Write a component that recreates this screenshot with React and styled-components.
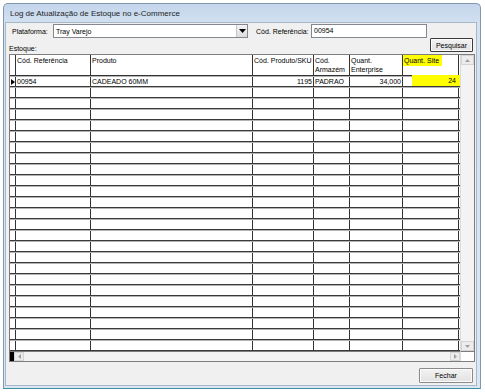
import React from 'react'
import styled, { createGlobalStyle } from 'styled-components'

const GlobalStyle = createGlobalStyle`
body {
  margin: 0;
  background: #ffffff;
  font-family: "Liberation Sans", Arial, sans-serif;
}
`

const COLS = '6px 75px 162px 61px 36px 53px 56px'

const rows = [
  { ref: '00954', produto: 'CADEADO 60MM', sku: '1195', armazem: 'PADRAO', enterprise: '34,000', site: '24' },
]
const EMPTY_ROWS = 25

function App() {
  const filler = Array.from({ length: EMPTY_ROWS })
  return (
    <Page>
      <GlobalStyle />
      <Window>
        <TitleBar>Log de Atualização de Estoque no e-Commerce</TitleBar>
        <Client>
          <FilterRow>
            <Label $w={38}>Plataforma:</Label>
            <Select>
              <SelectText>Tray Varejo</SelectText>
              <DropButton>
                <svg width="7" height="4" viewBox="0 0 7 4"><path d="M0 0h7L3.5 4z" fill="#000" /></svg>
              </DropButton>
            </Select>
            <Label $gap={8} $w={52}>Cód. Referência:</Label>
            <Input>00954</Input>
          </FilterRow>
          <SubRow>
            <Label>Estoque:</Label>
            <Button $w={43} $default>Pesquisar</Button>
          </SubRow>
          <GridFrame>
            <Table>
              <HeaderRow>
                <HeadCell />
                <HeadCell>Cód. Referência</HeadCell>
                <HeadCell>Produto</HeadCell>
                <HeadCell>Cód. Produto/SKU</HeadCell>
                <HeadCell>Cód.<br />Armazém</HeadCell>
                <HeadCell>Quant.<br />Enterprise</HeadCell>
                <HeadCell><Marker>Quant. Site</Marker></HeadCell>
              </HeaderRow>
              {rows.map((r) => (
                <Row key={r.ref}>
                  <Indicator>
                    <svg width="4" height="6" viewBox="0 0 4 6"><path d="M0 0l4 3-4 3z" fill="#000" /></svg>
                  </Indicator>
                  <Cell>{r.ref}</Cell>
                  <Cell>{r.produto}</Cell>
                  <Cell $right>{r.sku}</Cell>
                  <Cell>{r.armazem}</Cell>
                  <Cell $right>{r.enterprise}</Cell>
                  <Cell><SiteValue>{r.site}</SiteValue></Cell>
                </Row>
              ))}
              {filler.map((_, i) => (
                <Row key={i}>
                  <Indicator />
                  <Cell />
                  <Cell />
                  <Cell />
                  <Cell />
                  <Cell />
                  <Cell />
                </Row>
              ))}
            </Table>
            <VScroll>
              <ArrowBox>
                <svg width="5" height="3" viewBox="0 0 5 3"><path d="M0 3L2.5 0 5 3z" fill="#a0a0a0" /></svg>
              </ArrowBox>
              <Track />
              <ArrowBox>
                <svg width="5" height="3" viewBox="0 0 5 3"><path d="M0 0h5L2.5 3z" fill="#a0a0a0" /></svg>
              </ArrowBox>
            </VScroll>
            <HScroll>
              <BlackStub />
              <ArrowBox $h>
                <svg width="3" height="5" viewBox="0 0 3 5"><path d="M3 0v5L0 2.5z" fill="#a0a0a0" /></svg>
              </ArrowBox>
              <Track />
              <ArrowBox $h>
                <svg width="3" height="5" viewBox="0 0 3 5"><path d="M0 0v5L3 2.5z" fill="#a0a0a0" /></svg>
              </ArrowBox>
            </HScroll>
            <Corner />
          </GridFrame>
          <Footer>
            <Button $w={54} $h={15}>Fechar</Button>
          </Footer>
        </Client>
      </Window>
    </Page>
  )
}

export default App

const Page = styled.div`
padding: 3px 0 0 3px;
font-size: 7px;
color: #000;
`

const Window = styled.div`
width: 478px;
height: 386px;
box-sizing: border-box;
display: flex;
flex-direction: column;
border: 1px solid #8497ae;
border-bottom-color: #3f8ea4;
border-radius: 5px 5px 0 0;
background: linear-gradient(to bottom, #c4d6ec 0px, #d3e1f1 20px, #d9e6f3 100%);
padding: 0 3px 2px 1px;
`

const TitleBar = styled.div`
height: 18px;
display: flex;
align-items: center;
padding-left: 5px;
font-size: 8px;
color: #1e1e1e;
`

const Client = styled.div`
flex: 1;
background: #f0f0f0;
border: 1px solid #a9b8c9;
display: flex;
flex-direction: column;
padding: 1px 3px 0 0;
`

const FilterRow = styled.div`
display: flex;
align-items: center;
height: 14px;
padding-left: 6px;
`

const Label = styled.span`
${(p) => (p.$w ? `width: ${p.$w}px;` : '')}
margin-left: ${(p) => p.$gap || 0}px;
margin-right: 3px;
white-space: nowrap;
`

const Select = styled.div`
width: 195px;
height: 14px;
box-sizing: border-box;
border: 1px solid #828790;
background: #fff;
display: flex;
align-items: center;
`

const SelectText = styled.span`
flex: 1;
padding-left: 2px;
`

const DropButton = styled.div`
width: 11px;
height: 12px;
box-sizing: border-box;
border-left: 1px solid #c6c6c6;
background: linear-gradient(#f4f4f4, #dcdcdc);
display: flex;
align-items: center;
justify-content: center;
`

const Input = styled.div`
width: 116px;
height: 14px;
box-sizing: border-box;
border: 1px solid #828790;
background: #fff;
padding-left: 2px;
line-height: 12px;
`

const SubRow = styled.div`
display: flex;
justify-content: space-between;
align-items: flex-end;
height: 15px;
margin-top: -1px;
padding-left: 3px;
`

const Button = styled.div`
width: ${(p) => p.$w}px;
height: ${(p) => p.$h || 14}px;
box-sizing: border-box;
border: 1px solid ${(p) => (p.$default ? '#3c3c3c' : '#8a8a8a')};
box-shadow: inset 0 0 0 1px #fcfcfc;
border-radius: 1px;
background: linear-gradient(#f2f2f2, #e2e2e2);
display: flex;
align-items: center;
justify-content: center;
`

const GridFrame = styled.div`
margin: 2px 0 0 3px;
width: 466px;
height: 308px;
box-sizing: border-box;
border: 1px solid #7d7d7d;
background: #fff;
display: grid;
grid-template-columns: 1fr 14px;
grid-template-rows: 1fr 10px;
`

const Table = styled.div`
overflow: hidden;
`

const HeaderRow = styled.div`
display: grid;
grid-template-columns: ${COLS};
height: 21px;
box-sizing: border-box;
border-bottom: 1px solid #333;
`

const HeadCell = styled.div`
border-right: 1px solid #333;
padding: 1px 0 0 1px;
line-height: 9px;
white-space: nowrap;
overflow: visible;
`

const Marker = styled.span`
display: inline-block;
background: #ffff00;
margin: -1px 0 0 -1px;
padding: 1px 3px 1px 1px;
`

const Row = styled.div`
display: grid;
grid-template-columns: ${COLS};
height: 11px;
box-sizing: border-box;
border-top: 1px solid #b4b4b4;
border-bottom: 1px solid #3a3a3a;
width: 453px;
`

const Indicator = styled.div`
border-right: 1px solid #333;
display: flex;
align-items: center;
justify-content: center;
`

const Cell = styled.div`
border-right: 1px solid #333;
padding: 0 1px;
line-height: 9px;
white-space: nowrap;
text-align: ${(p) => (p.$right ? 'right' : 'left')};
`

const SiteValue = styled.div`
background: #ffff00;
margin: -2px -5px 0 8px;
height: 11px;
line-height: 11px;
text-align: right;
padding-right: 6px;
`

const VScroll = styled.div`
display: flex;
flex-direction: column;
background: #f3f3f3;
border-left: 1px solid #dcdcdc;
`

const HScroll = styled.div`
display: flex;
background: #f3f3f3;
border-top: 1px solid #7d7d7d;
`

const ArrowBox = styled.div`
${(p) => (p.$h ? 'width: 10px;' : 'height: 10px;')}
box-sizing: border-box;
border: 1px solid #d4d4d4;
background: #ececec;
display: flex;
align-items: center;
justify-content: center;
`

const Track = styled.div`
flex: 1;
`

const BlackStub = styled.div`
width: 4px;
background: #000;
`

const Corner = styled.div`
background: #fff;
border-top: 1px solid #7d7d7d;
border-left: 1px solid #dcdcdc;
`

const Footer = styled.div`
display: flex;
justify-content: flex-end;
margin-top: 6px;
`
